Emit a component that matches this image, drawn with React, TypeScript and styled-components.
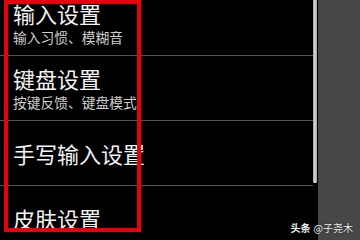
import React from 'react';
import styled, { createGlobalStyle } from 'styled-components';

const GlobalStyle = createGlobalStyle`
  html, body {
    margin: 0;
    padding: 0;
    background: #000;
  }
  body {
    font-family: "Noto Sans CJK SC", "Noto Sans", sans-serif;
  }
`;

const Screen = styled.div`
  position: relative;
  display: flex;
  width: 360px;
  height: 240px;
  overflow: hidden;
  background: #000;
`;

const ListPane = styled.div`
  flex: 0 0 313px;
  overflow: hidden;
  background: #000;
`;

// list is scrolled a little, first row sits partly above the top
const ListScroll = styled.div`
  margin-top: -9px;
`;

const Item = styled.div`
  height: 64px;
  box-sizing: content-box;
  display: flex;
  flex-direction: column;
  justify-content: center;
  gap: 5px;
  padding-left: 13px;
  border-bottom: 1px solid #555;
`;

const Title = styled.div`
  font-size: 22px;
  line-height: 23px;
  color: #f4f4f4;
  white-space: nowrap;
`;

const Subtitle = styled.div`
  font-size: 13.75px;
  line-height: 14px;
  color: #cfcfcf;
  white-space: nowrap;
`;

const ScrollTrack = styled.div`
  flex: 0 0 5px;
  background: #000;
`;

const Thumb = styled.div`
  width: 4px;
  height: 183px;
  background: linear-gradient(to right, #9a9a9a, #d2d2d2 40%, #c4c4c4 80%, #8a8a8a);
  border-radius: 0 0 1px 1px;
`;

const SidePanel = styled.div`
  flex: 1;
  background: #474747;
`;

const Highlight = styled.div`
  position: absolute;
  left: 4px;
  top: 0;
  width: 137px;
  height: 232px;
  box-sizing: border-box;
  border: 4px solid #e8000c;
  pointer-events: none;
`;

const Watermark = styled.div`
  position: absolute;
  right: 7px;
  bottom: 7px;
  font-size: 10px;
  line-height: 11px;
  color: #f2f2f2;
  white-space: nowrap;
  text-shadow: 0 0 2px rgba(0, 0, 0, 0.7);

  b {
    font-weight: 700;
    margin-right: 3px;
  }
`;

const settings = [
  { title: '输入设置', sub: '输入习惯、模糊音' },
  { title: '键盘设置', sub: '按键反馈、键盘模式' },
  { title: '手写输入设置' },
  { title: '皮肤设置' },
];

const App = () => {
  return (
    <>
      <GlobalStyle />
      <Screen>
        <ListPane>
          <ListScroll>
            {settings.map((s) => (
              <Item key={s.title}>
                <Title>{s.title}</Title>
                {s.sub && <Subtitle>{s.sub}</Subtitle>}
              </Item>
            ))}
          </ListScroll>
        </ListPane>
        <ScrollTrack>
          <Thumb />
        </ScrollTrack>
        <SidePanel />
        <Highlight />
        <Watermark>
          <b>头条</b>@子尧木
        </Watermark>
      </Screen>
    </>
  );
};

export default App;
